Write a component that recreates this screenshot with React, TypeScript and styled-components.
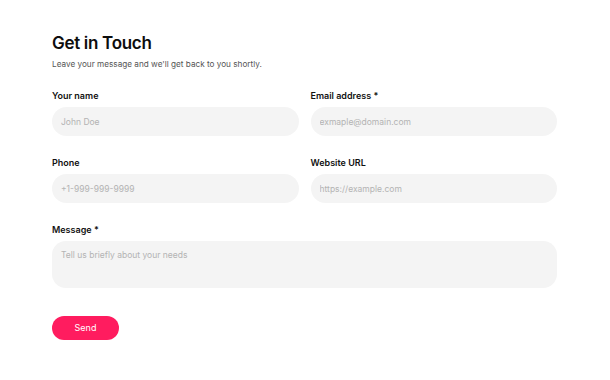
import styled, { createGlobalStyle } from "styled-components";

const Global = createGlobalStyle`
  html, body { margin: 0; padding: 0; background: #fff; }
  body { font-family: Inter, "Noto Sans", sans-serif; color: #111; }
  * { box-sizing: border-box; }
`;

const Page = styled.div`
  padding: 31px 53px 0 52px;
`;

const Title = styled.h1`
  margin: 0;
  font-size: 17px;
  line-height: 24px;
  font-weight: 600;
  letter-spacing: -0.3px;
  color: #0d0d0d;
`;

const Subtitle = styled.p`
  margin: 2px 0 0;
  font-size: 8.2px;
  line-height: 14px;
  color: #555;
`;

const Form = styled.form`
  margin-top: 18px;
  display: grid;
  grid-template-columns: 1fr 1fr;
  column-gap: 12px;
  row-gap: 20px;
`;

const Field = styled.label<{ $wide?: boolean }>`
  display: flex;
  flex-direction: column;
  gap: 4px;
  grid-column: ${(p) => (p.$wide ? "1 / -1" : "auto")};
`;

const Label = styled.span`
  font-size: 9px;
  line-height: 14px;
  font-weight: 600;
  color: #111;
`;

const Input = styled.input`
  height: 29px;
  border: none;
  outline: none;
  border-radius: 15px;
  background: #f4f4f4;
  padding: 0 9px;
  font-family: inherit;
  font-size: 8.5px;
  color: #222;
  &::placeholder { color: #b3b3b3; }
`;

const TextArea = styled.textarea`
  height: 47px;
  border: none;
  outline: none;
  resize: none;
  border-radius: 14px;
  background: #f4f4f4;
  padding: 8px 9px;
  font-family: inherit;
  font-size: 8.5px;
  line-height: 12px;
  color: #222;
  &::placeholder { color: #b3b3b3; }
`;

const Actions = styled.div`
  grid-column: 1 / -1;
  margin-top: 7px;
`;

const SendButton = styled.button`
  width: 67px;
  height: 24px;
  border: none;
  border-radius: 12px;
  background: #ff1c5f;
  color: #fff;
  font-family: inherit;
  font-size: 9px;
  cursor: pointer;
`;

export default function App() {
  return (
    <>
      <Global />
      <Page>
        <Title>Get in Touch</Title>
        <Subtitle>Leave your message and we'll get back to you shortly.</Subtitle>
        <Form onSubmit={(e) => e.preventDefault()}>
          <Field>
            <Label>Your name</Label>
            <Input placeholder="John Doe" />
          </Field>
          <Field>
            <Label>Email address *</Label>
            <Input placeholder="exmaple@domain.com" />
          </Field>
          <Field>
            <Label>Phone</Label>
            <Input placeholder="+1-999-999-9999" />
          </Field>
          <Field>
            <Label>Website URL</Label>
            <Input placeholder="https://example.com" />
          </Field>
          <Field $wide>
            <Label>Message *</Label>
            <TextArea placeholder="Tell us briefly about your needs" />
          </Field>
          <Actions>
            <SendButton type="submit">Send</SendButton>
          </Actions>
        </Form>
      </Page>
    </>
  );
}
